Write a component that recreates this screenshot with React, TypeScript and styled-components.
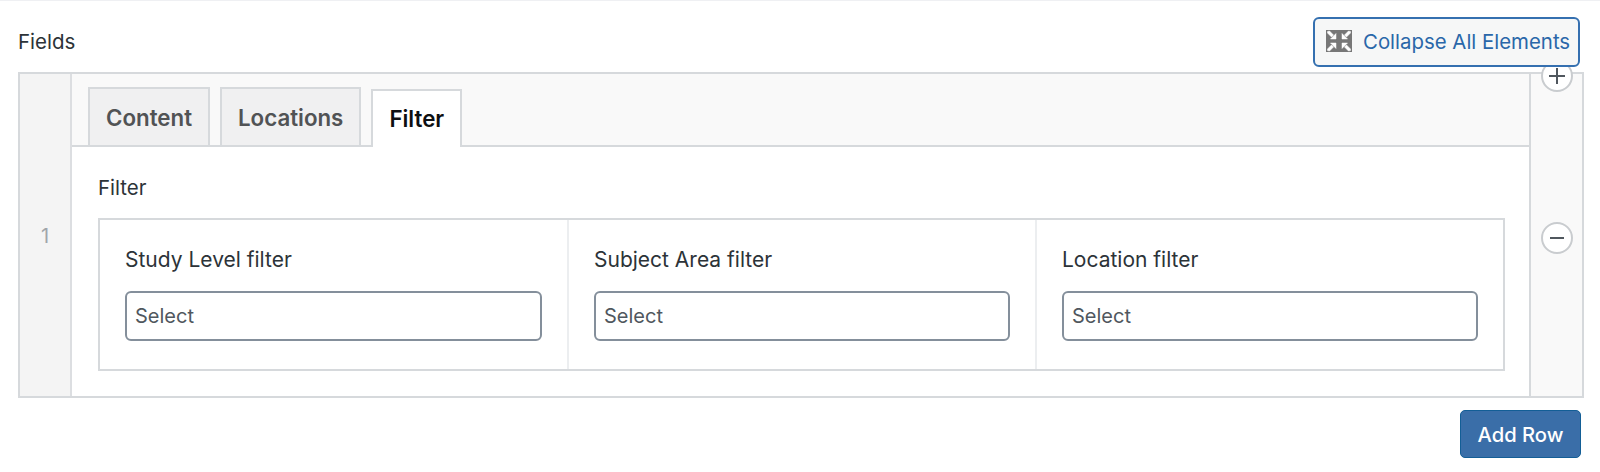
import React from "react";
import styled, { createGlobalStyle } from "styled-components";

const Global = createGlobalStyle`
  html, body { margin: 0; padding: 0; background: #fff; }
  body { font-family: Inter, "Noto Sans", "Liberation Sans", sans-serif; }
  * { box-sizing: border-box; }
`;

const Page = styled.div`
  height: 472px;
  border-top: 1px solid #eff0f3;
  padding: 16px 16px 0 18px;
  overflow: hidden;
`;

const Header = styled.div`
  display: flex;
  align-items: center;
  justify-content: space-between;
  height: 50px;
  padding-right: 4px;
`;

const Title = styled.div`
  font-size: 20.5px;
  color: #2c3338;
  padding-bottom: 2px;
`;

const CollapseButton = styled.button`
  position: relative;
  z-index: 2;
  display: flex;
  align-items: center;
  gap: 11px;
  width: 267px;
  height: 50px;
  padding: 0 0 2px 11px;
  background: #f6f7f7;
  border: 2px solid #3570b0;
  border-radius: 6px;
  color: #2a67a9;
  font: 400 20.4px Inter, sans-serif;
  white-space: nowrap;
`;

const Table = styled.div`
  display: flex;
  height: 326px;
  margin-top: 5px;
  border: 2px solid #d6d9dc;
  width: 1566px;
`;

const IndexCell = styled.div`
  flex: none;
  width: 52px;
  display: flex;
  align-items: center;
  justify-content: center;
  padding-top: 2px;
  background: #f4f4f4;
  border-right: 2px solid #dcdee1;
  color: #a0a5aa;
  font-size: 20px;
`;

const Main = styled.div`
  flex: 1;
  min-width: 0;
  display: flex;
  flex-direction: column;
`;

const TabBar = styled.div`
  flex: none;
  height: 73px;
  display: flex;
  align-items: flex-end;
  gap: 10px;
  padding-left: 16px;
  background: #f9f9f9;
  border-bottom: 2px solid #d6d9dc;
`;

const Tab = styled.div<{ $active?: boolean }>`
  height: 58px;
  margin-bottom: ${(p) => (p.$active ? "-2px" : "0")};
  padding: 0 16px ${(p) => (p.$active ? "1px" : "0")};
  display: flex;
  align-items: center;
  border: 2px solid #d6d9dc;
  border-bottom: ${(p) => (p.$active ? "none" : "0")};
  background: ${(p) => (p.$active ? "#fff" : "#f0f0f1")};
  color: ${(p) => (p.$active ? "#0d0f12" : "#515355")};
  font-size: 22.3px;
  font-weight: 600;
`;

const Panel = styled.div`
  flex: 1;
  padding: 29px 24px 0 26px;
  background: #fff;
`;

const PanelLabel = styled.div`
  font-size: 20.5px;
  line-height: 24px;
  color: #2c3338;
  margin-bottom: 18px;
`;

const Grid = styled.div`
  display: grid;
  grid-template-columns: 467px 468px 1fr;
  height: 153px;
  border: 2px solid #d6d9dc;
`;

const Field = styled.div<{ $first?: boolean }>`
  padding: 27px 25px 0 25px;
  border-left: ${(p) => (p.$first ? "none" : "2px solid #eceef0")};
`;

const FieldLabel = styled.div`
  font-size: 21px;
  line-height: 26px;
  color: #2c3338;
  margin-bottom: 18px;
`;

const SelectBox = styled.div`
  height: 50px;
  display: flex;
  align-items: center;
  padding-left: 8px;
  background: #fff;
  border: 2px solid #848f9b;
  border-radius: 6px;
  color: #50575e;
  font-size: 20px;
`;

const Actions = styled.div`
  position: relative;
  flex: none;
  width: 53px;
  display: flex;
  align-items: center;
  justify-content: center;
  background: #f9f9f9;
  border-left: 2px solid #d6d9dc;
  padding-top: 6px;
`;

const RoundButton = styled.div<{ $top?: boolean }>`
  position: ${(p) => (p.$top ? "absolute" : "static")};
  top: ${(p) => (p.$top ? "-14px" : "auto")};
  left: 10px;
  width: 32px;
  height: 32px;
  display: flex;
  align-items: center;
  justify-content: center;
  background: #fff;
  border: 2px solid #c9cccf;
  border-radius: 50%;
`;

const Footer = styled.div`
  display: flex;
  justify-content: flex-end;
  margin-top: 12px;
  padding-right: 3px;
`;

const AddRow = styled.button`
  width: 121px;
  height: 48px;
  padding: 0;
  background: #3a6ea8;
  border: 1px solid #135e96;
  border-radius: 5px;
  color: #fff;
  font: 500 20.2px Inter, sans-serif;
`;

const CollapseIcon = () => (
  <svg width="26" height="22" viewBox="0 0 26 22">
    <rect width="26" height="22" fill="#777" />
    <g fill="#fff" stroke="#fff" strokeWidth="0.5">
      <path d="M10 9V3.500L4.500 9zM1.500 1.500l2-.5 4 4-2 2-4-4z" />
      <path d="M16 9V3.500L21.500 9zM24.500 1.500l-2-.5-4 4 2 2 4-4z" />
      <path d="M10 13v5.500L4.500 13zM1.500 20.500l2 .5 4-4-2-2-4 4z" />
      <path d="M16 13v5.500l5.500-5.500zM24.500 20.500l-2 .5-4-4 2-2 4 4z" />
    </g>
  </svg>
);

const PlusIcon = () => (
  <svg width="18" height="18" viewBox="0 0 18 18">
    <path d="M9 1v16M1 9h16" stroke="#50575e" strokeWidth="2" />
  </svg>
);

const MinusIcon = () => (
  <svg width="18" height="18" viewBox="0 0 18 18">
    <path d="M2 9h14" stroke="#50575e" strokeWidth="2" />
  </svg>
);

const fields = ["Study Level filter", "Subject Area filter", "Location filter"];

export default function App() {
  return (
    <Page>
      <Global />
      <Header>
        <Title>Fields</Title>
        <CollapseButton>
          <CollapseIcon />
          Collapse All Elements
        </CollapseButton>
      </Header>
      <Table>
        <IndexCell>1</IndexCell>
        <Main>
          <TabBar>
            <Tab>Content</Tab>
            <Tab>Locations</Tab>
            <Tab $active>Filter</Tab>
          </TabBar>
          <Panel>
            <PanelLabel>Filter</PanelLabel>
            <Grid>
              {fields.map((f, i) => (
                <Field key={f} $first={i === 0}>
                  <FieldLabel>{f}</FieldLabel>
                  <SelectBox>Select</SelectBox>
                </Field>
              ))}
            </Grid>
          </Panel>
        </Main>
        <Actions>
          <RoundButton $top>
            <PlusIcon />
          </RoundButton>
          <RoundButton>
            <MinusIcon />
          </RoundButton>
        </Actions>
      </Table>
      <Footer>
        <AddRow>Add Row</AddRow>
      </Footer>
    </Page>
  );
}
